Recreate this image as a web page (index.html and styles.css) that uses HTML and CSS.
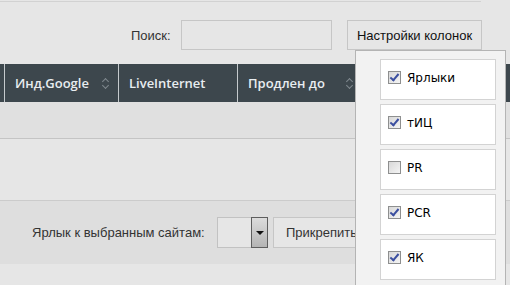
FILE: index.html
```html
<!DOCTYPE html>
<html lang="ru">
<head>
    <meta charset="UTF-8">
    <title>Сайты</title>
    <link rel="stylesheet" href="styles.css">
</head>
<body>
<div class="top-line"></div>

<!-- search and columns -->
<div class="toolbar">
    <label class="search-label">Поиск:</label>
    <input class="search-input" type="text">
    <button class="btn cols-btn">Настройки колонок</button>
</div>

<!-- table -->
<div class="grid">
    <div class="grid-head">
        <div class="th th-first"></div>
        <div class="th th-google">Инд.Google<span class="sort"></span></div>
        <div class="th th-li">LiveInternet</div>
        <div class="th th-date">Продлен до<span class="sort"></span></div>
        <div class="th th-rest"></div>
    </div>
    <div class="grid-row"></div>
    <div class="grid-empty"></div>
</div>

<!-- actions -->
<div class="actions">
    <span class="actions-label">Ярлык к выбранным сайтам:</span>
    <div class="select">
        <div class="select-value"></div>
        <div class="select-arrow"></div>
    </div>
    <button class="btn attach-btn">Прикрепить</button>
</div>

<!-- column menu -->
<div class="cols-menu">
    <label class="cols-item"><input type="checkbox" checked> Ярлыки</label>
    <label class="cols-item"><input type="checkbox" checked> тИЦ</label>
    <label class="cols-item"><input type="checkbox"> PR</label>
    <label class="cols-item"><input type="checkbox" checked> PCR</label>
    <label class="cols-item"><input type="checkbox" checked> ЯК</label>
</div>
</body>
</html>
```

FILE: styles.css
```css
html {
    height: 285px;
    overflow: hidden;
}

body {
    margin: 0;
    background-color: #e6e6e6;
    font-family: Tahoma, "DejaVu Sans", sans-serif;
    font-size: 13px;
    color: #333;
}

.top-line {
    width: 481px;
    height: 1px;
    margin-top: 1px;
    background-color: #d2d2d2;
}

.toolbar {
    display: flex;
    align-items: center;
    height: 30px;
    margin-top: 18px;
    padding-left: 131px;
}

.search-label {
    width: 50px;
    font-family: "Liberation Sans", sans-serif;
    font-size: 13px;
    color: #333;
}

.search-input {
    width: 151px;
    height: 30px;
    box-sizing: border-box;
    border: 1px solid #c6c6c6;
    background-color: #e6e6e6;
    padding: 0;
    margin: 0;
}

.btn {
    height: 30px;
    box-sizing: border-box;
    border: 1px solid #c6c6c6;
    background-color: #e6e6e6;
    font-family: "Liberation Sans", sans-serif;
    font-size: 13px;
    color: #111;
    padding: 0;
    margin: 0;
    white-space: nowrap;
}

.cols-btn {
    margin-left: 15px;
    width: 135px;
    text-align: center;
}

.grid {
    margin-top: 14px;
}

.grid-head {
    display: flex;
    height: 38px;
    background-color: #3d474d;
}

.th {
    position: relative;
    box-sizing: border-box;
    height: 38px;
    line-height: 38px;
    border-right: 1px solid #c5cacd;
    padding-left: 10px;
    font-family: "Open Sans", sans-serif;
    font-weight: 600;
    font-size: 13px;
    color: #e8edf0;
    white-space: nowrap;
}

.th-first {
    width: 5px;
    padding: 0;
}

.th-google {
    width: 114px;
}

.th-li {
    width: 119px;
}

.th-date {
    width: 125px;
}

.th-rest {
    flex: 1;
    border-right: none;
}

/* sort arrows */
.sort {
    position: absolute;
    right: 9px;
    top: 14px;
    width: 7px;
    height: 11px;
}

.sort::before,
.sort::after {
    content: "";
    position: absolute;
    left: 1px;
    width: 4px;
    height: 4px;
    border-left: 1px solid #7f888e;
    border-top: 1px solid #7f888e;
}

.sort::before {
    top: 1px;
    transform: rotate(45deg);
}

.sort::after {
    top: 5px;
    transform: rotate(225deg);
}

.grid-row {
    height: 36px;
    background-color: #e0e0e0;
    border-bottom: 1px solid #c4c4c4;
}

.grid-empty {
    height: 61px;
    border-bottom: 1px solid #cbcbcb;
}

.actions {
    display: flex;
    align-items: center;
    height: 63px;
    background-color: #dedede;
    padding-left: 32px;
}

.actions-label {
    width: 185px;
    font-family: "Liberation Sans", sans-serif;
    font-size: 13px;
    color: #333;
}

.select {
    display: flex;
    height: 31px;
    width: 51px;
    box-sizing: border-box;
    border: 1px solid #c2c2c2;
    background-color: #e6e6e6;
}

.select-value {
    flex: 1;
}

.select-arrow {
    position: relative;
    width: 17px;
    margin: -1px -1px -1px 0;
    box-sizing: border-box;
    border: 1px solid #5e5e5e;
    background: linear-gradient(#dcdcdc, #b4b4b4);
}

.select-arrow::after {
    content: "";
    position: absolute;
    left: 4px;
    top: 13px;
    border-left: 4px solid transparent;
    border-right: 4px solid transparent;
    border-top: 4px solid #111;
}

.attach-btn {
    margin-left: 5px;
    height: 31px;
    padding: 0 12px;
    color: #333;
    text-align: left;
    width: 100px;
}

.cols-menu {
    position: absolute;
    left: 355px;
    top: 50px;
    width: 151px;
    height: 240px;
    box-sizing: border-box;
    border: 1px solid #b4b4b4;
    background-color: #f2f2f2;
    padding: 8px 9px 0 24px;
}

.cols-item {
    display: flex;
    align-items: center;
    height: 41px;
    box-sizing: border-box;
    margin-bottom: 4px;
    border: 1px solid #d3d3d3;
    background-color: #fff;
    padding: 0 0 4px 7px;
    font-family: Tahoma, "DejaVu Sans", sans-serif;
    font-size: 12px;
    color: #000;
}

/* old style checkbox */
.cols-item input {
    appearance: none;
    -webkit-appearance: none;
    position: relative;
    width: 13px;
    height: 13px;
    margin: 0 6px 0 0;
    box-sizing: border-box;
    border: 1px solid #8e8f8f;
    background: linear-gradient(135deg, #d8d8d8, #f4f4f4);
}

.cols-item input:checked::after {
    content: "";
    position: absolute;
    left: 3px;
    top: 0px;
    width: 3px;
    height: 7px;
    border-right: 2px solid #3b4fa0;
    border-bottom: 2px solid #3b4fa0;
    transform: rotate(40deg);
}
```
